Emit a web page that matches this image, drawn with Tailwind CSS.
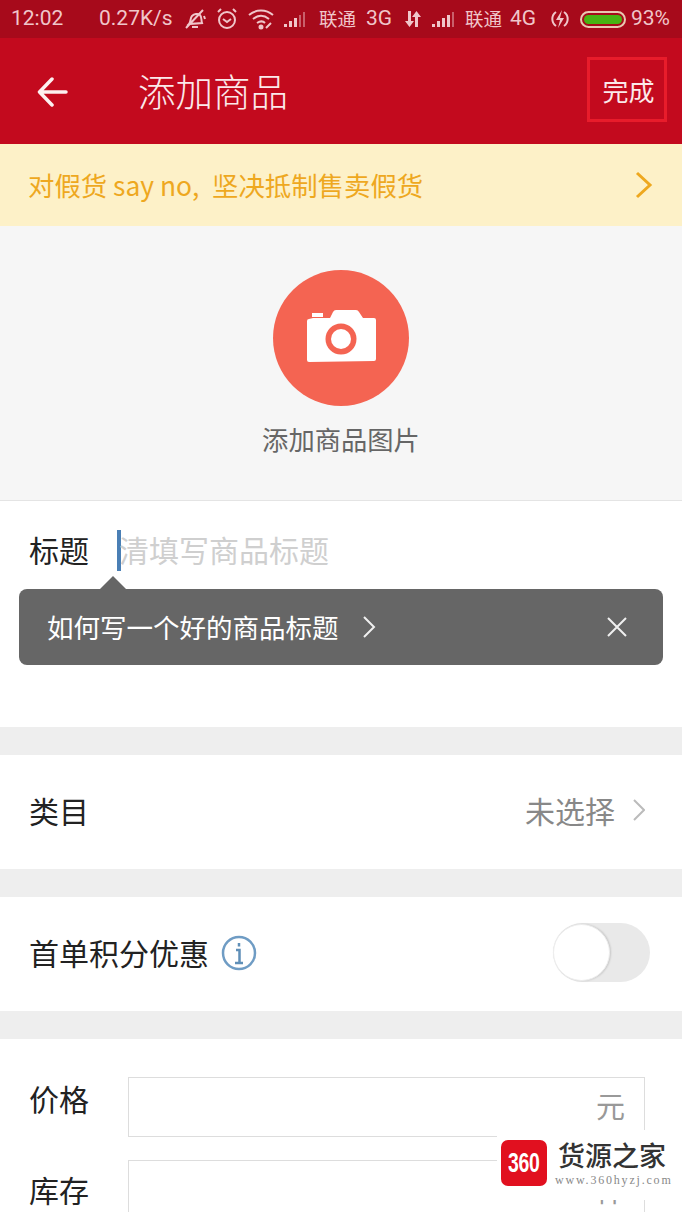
<!DOCTYPE html>
<html lang="zh-CN">
<head>
  <meta charset="UTF-8" />
  <title>添加商品</title>
  <script src="https://cdn.jsdelivr.net/npm/@tailwindcss/browser@4"></script>
</head>
<body class="bg-white">
  <div class="relative w-[682px] h-[1212px] overflow-hidden bg-white font-['Noto_Sans_CJK_SC','Noto_Sans',sans-serif] text-[#333]">

    <!-- status bar -->
    <div class="h-[38px] bg-[#a70a1b] flex items-center pl-[11px] text-[21px] text-[#f0c6ca] font-['Roboto',sans-serif] whitespace-nowrap">
      <span class="w-[88px]">12:02</span>
      <span class="w-[84px]">0.27K/s</span>
      <svg class="w-[24px] h-[24px]" viewBox="0 0 24 24" fill="none" stroke="#f0c6ca" stroke-width="2"><path d="M6 17c2-2 1-6 3-8s6-3 8-1 1 5 2 8zM9 20h6M3 21 20 3M21 9l1 3" /></svg>
      <svg class="w-[22px] h-[24px] ml-[9px]" viewBox="0 0 22 24" fill="none" stroke="#f0c6ca" stroke-width="2"><circle cx="11" cy="13" r="8" /><path d="m7 12 4 3 4-3M2 5l3-3M20 5l-3-3" /></svg>
      <svg class="w-[26px] h-[22px] ml-[10px]" viewBox="0 0 26 22" fill="none" stroke="#f0c6ca" stroke-width="2"><path d="M1 7c7-6 17-6 24 0M5 11c5-4 11-4 16 0M9 15c3-2 6-2 8 0M18 20l5-5" /><circle cx="13" cy="19" r="1.500" fill="#f0c6ca" /></svg>
      <svg class="w-[24px] h-[16px] ml-[9px]" viewBox="0 0 24 16"><path d="M1 13h3v3H1zM6 10h3v6H6zM11 7h3v9h-3z" fill="#f0c6ca" /><path d="M16 4h2v12h-2zM20 1h2v15h-2z" fill="#c9606b" /></svg>
      <span class="ml-[12px] w-[37px] text-[18.500px] font-['Noto_Sans_CJK_SC',sans-serif]">联通</span>
      <span class="ml-[10px] w-[28px]">3G</span>
      <svg class="w-[18px] h-[18px] ml-[10px]" viewBox="0 0 18 18" fill="#f0c6ca"><path d="M4 1h3v10h3l-4.500 6L1 11h3zM11 17h3V7h3l-4.500-6L8 7h3z" /></svg>
      <svg class="w-[24px] h-[16px] ml-[9px]" viewBox="0 0 24 16"><path d="M1 13h3v3H1zM6 10h3v6H6zM11 7h3v9h-3zM16 4h3v12h-3z" fill="#f0c6ca" /><path d="M21 1h2v15h-2z" fill="#c9606b" /></svg>
      <span class="ml-[10px] w-[37px] text-[18.500px] font-['Noto_Sans_CJK_SC',sans-serif]">联通</span>
      <span class="ml-[8px] w-[28px]">4G</span>
      <svg class="w-[20px] h-[20px] ml-[12px]" viewBox="0 0 20 20" fill="none" stroke="#f0c6ca" stroke-width="2"><path d="M6 3a8.500 8.500 0 0 0 0 14M14 3a8.500 8.500 0 0 1 0 14" /><path d="M12 1 6 11h4l-2 8 6-10h-4z" fill="#f0c6ca" stroke="none" /></svg>
      <div class="ml-[10px] w-[46px] h-[17px] rounded-full border-2 border-[#e9c8b0] p-[2px]"><div class="h-full w-full rounded-full bg-[#47b312]"></div></div>
      <span class="ml-[5px]">93%</span>
    </div>

    <!-- header -->
    <div class="relative h-[106px] bg-[#c30a1e] flex items-center text-[#fbe9ea]">
      <svg class="ml-[37px] w-[32px] h-[32px]" viewBox="0 0 32 32" fill="none" stroke="#fdf0f0" stroke-width="3.500" stroke-linecap="round" stroke-linejoin="round"><path d="M29 17H3M15 4 2.500 17 15 30" /></svg>
      <span class="ml-[69px] mb-[2px] text-[37.500px] leading-none font-light">添加商品</span>
      <div class="absolute left-[587px] top-[19px] w-[80px] h-[65px] border-[3px] border-[#e81c2b] flex items-center justify-center pl-[3px] text-[26px]">完成</div>
    </div>

    <!-- banner -->
    <div class="h-[82px] bg-[#fdf1c8] flex items-center justify-between pl-[28px] pr-[29px] text-[#eea81f] text-[26.400px]">
      <span>对假货 say no<span class="inline-block w-[20px]">,</span>坚决抵制售卖假货</span>
      <svg class="w-[18px] h-[28px]" viewBox="0 0 18 28" fill="none" stroke="#eea81f" stroke-width="3"><path d="m2 2 13 12L2 26" /></svg>
    </div>

    <!-- photo -->
    <div class="h-[275px] bg-[#f6f6f6] border-b border-[#e4e4e4] flex flex-col items-center pt-[44px]">
      <div class="w-[136px] h-[136px] rounded-full bg-[#f46452] flex items-center justify-center">
        <svg class="w-[70px] h-[56px]" viewBox="0 3 70 56"><path fill="#fff" d="M3 55a2 2 0 0 1-2-2V14a2 2 0 0 1 2-2l4-1h17l3-6q1-2 3-2h20q2 0 3 2l4 6h11a2 2 0 0 1 2 2v39a2 2 0 0 1-2 2zM6 6h11v4H6z" /><circle cx="35" cy="32" r="15.500" fill="#f46452" /><circle cx="35" cy="32" r="10" fill="#fff" /></svg>
      </div>
      <span class="mt-[14px] text-[26.300px] leading-[38px] text-[#666]">添加商品图片</span>
    </div>

    <!-- title -->
    <div class="h-[226px] pl-[29px] pt-[29px]">
      <div class="flex items-center h-[40px]">
        <span class="text-[30px] w-[88px] text-[#222] mb-[2px]">标题</span>
        <span class="w-[4px] h-[41px] bg-[#4a7fb5]"></span>
        <span class="text-[30px] text-[#cfcfcf] ml-[-2px] mb-[2px]">清填写商品标题</span>
      </div>
    </div>

    <!-- tooltip -->
    <div class="absolute left-[19px] top-[589px] w-[644px] h-[76px] rounded-[8px] bg-[#666] flex items-center pl-[28px] pr-[35px] text-white text-[26.500px]">
      <div class="absolute left-[80px] top-[-13px] w-0 h-0 border-l-[14px] border-r-[14px] border-b-[14px] border-l-transparent border-r-transparent border-b-[#666]"></div>
      <span>如何写一个好的商品标题</span>
      <svg class="ml-[22px] w-[16px] h-[24px]" viewBox="0 0 16 24" fill="none" stroke="#f0f0f0" stroke-width="2"><path d="m3 2 10 10L3 22" /></svg>
      <svg class="ml-auto w-[22px] h-[22px]" viewBox="0 0 22 22" fill="none" stroke="#f0f0f0" stroke-width="2"><path d="m2 2 18 18M20 2 2 20" /></svg>
    </div>

    <div class="h-[28px] bg-[#eeeeee]"></div>

    <!-- category -->
    <div class="h-[114px] flex items-center pl-[29px] pr-[37px] pb-[4px] text-[30px]">
      <span class="text-[#222]">类目</span>
      <span class="ml-auto text-[#888]">未选择</span>
      <svg class="ml-[18px] w-[12px] h-[22px]" viewBox="0 0 12 22" fill="none" stroke="#bbb" stroke-width="2"><path d="m1 1 10 10L1 21" /></svg>
    </div>

    <div class="h-[28px] bg-[#eeeeee]"></div>

    <!-- first order -->
    <div class="h-[114px] flex items-center pl-[29px] pr-[32px] pb-[4px] text-[30px]">
      <span class="text-[#222]">首单积分优惠</span>
      <svg class="ml-[12px] w-[36px] h-[36px] mt-[2px]" viewBox="0 0 36 36" fill="none" stroke="#6f9cc4" stroke-width="2.500"><circle cx="18" cy="18" r="16" /><path d="M18 8v3.500M15 15h3.500v13M14 28h8" stroke="#5f8fb8" /></svg>
      <div class="ml-auto relative w-[97px] h-[59px] rounded-full bg-[#e9e9e9]">
        <div class="absolute left-0 top-[1px] w-[57px] h-[57px] rounded-full bg-white border border-[#eee] shadow-[1px_0_2px_rgba(0,0,0,0.15)]"></div>
      </div>
    </div>

    <div class="h-[28px] bg-[#eeeeee]"></div>

    <!-- price -->
    <div class="pl-[29px] pr-[37px] pt-[38px] flex flex-col gap-[23px] text-[30px]">
      <div class="flex items-center h-[60px]">
        <span class="w-[99px] text-[#222] mb-[18px]">价格</span>
        <div class="flex-1 h-[60px] border border-[#ddd] flex items-center justify-end pr-[19px] pb-[2px] text-[29px] text-[#999]">元</div>
      </div>
      <div class="flex items-center h-[60px]">
        <span class="w-[99px] text-[#222] mb-[2px]">库存</span>
        <div class="flex-1 h-[60px] border border-[#ddd] flex items-center justify-end pr-[19px] text-[29px] text-[#999]">件</div>
      </div>
    </div>

    <!-- watermark -->
    <div class="absolute left-[497px] top-[1130px] w-[185px] h-[70px] bg-white flex items-start pl-[4px] pt-[10px]">
      <div class="w-[46px] h-[46px] rounded-[7px] bg-[#e1101f] flex items-center justify-center text-white font-['Liberation_Sans',sans-serif] font-bold text-[27px]"><span class="scale-x-[0.72] tracking-[-0.500px]">360</span></div>
      <div class="ml-[11px] flex flex-col">
        <span class="text-[27px] leading-[30px] font-medium text-[#333]">货源之家</span>
        <span class="mt-[3px] ml-[-3px] text-[12px] leading-[14px] text-[#888] font-['Liberation_Serif',serif] tracking-[1.800px]">www.360hyzj.com</span>
      </div>
    </div>
  </div>
</body>
</html>
